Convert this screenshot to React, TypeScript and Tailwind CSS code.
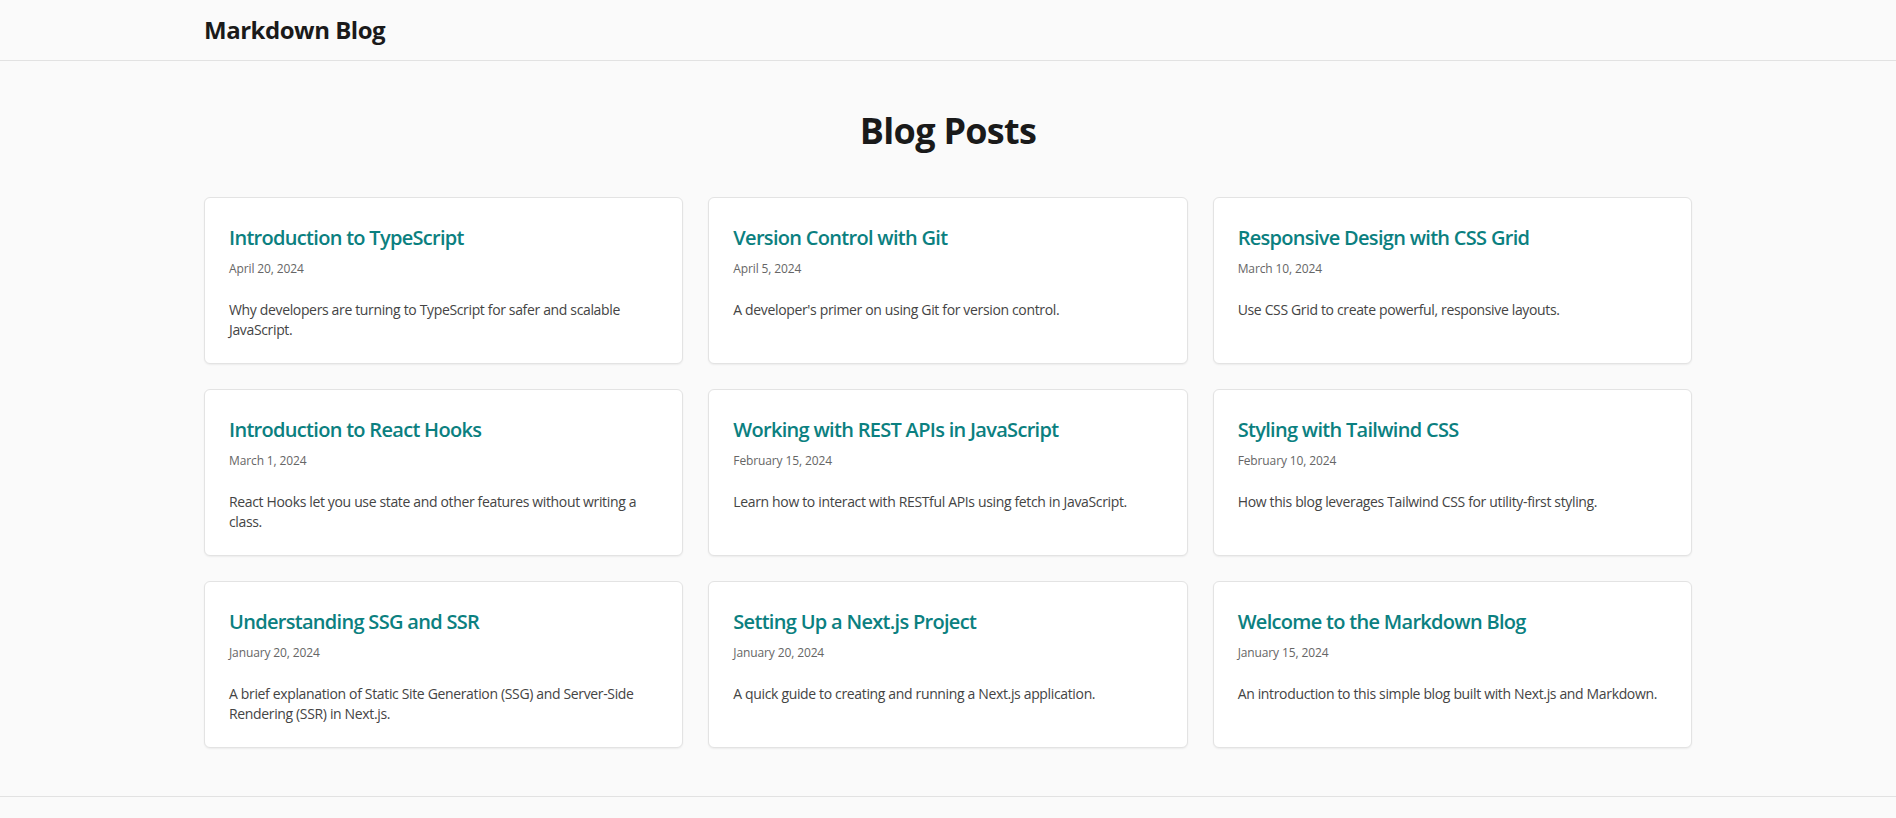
import React from "react";

interface Post {
    title: string;
    date: string;
    excerpt: string;
}

const posts: Post[] = [
    {
        title: "Introduction to TypeScript",
        date: "April 20, 2024",
        excerpt: "Why developers are turning to TypeScript for safer and scalable JavaScript.",
    },
    {
        title: "Version Control with Git",
        date: "April 5, 2024",
        excerpt: "A developer's primer on using Git for version control.",
    },
    {
        title: "Responsive Design with CSS Grid",
        date: "March 10, 2024",
        excerpt: "Use CSS Grid to create powerful, responsive layouts.",
    },
    {
        title: "Introduction to React Hooks",
        date: "March 1, 2024",
        excerpt: "React Hooks let you use state and other features without writing a class.",
    },
    {
        title: "Working with REST APIs in JavaScript",
        date: "February 15, 2024",
        excerpt: "Learn how to interact with RESTful APIs using fetch in JavaScript.",
    },
    {
        title: "Styling with Tailwind CSS",
        date: "February 10, 2024",
        excerpt: "How this blog leverages Tailwind CSS for utility-first styling.",
    },
    {
        title: "Understanding SSG and SSR",
        date: "January 20, 2024",
        excerpt: "A brief explanation of Static Site Generation (SSG) and Server-Side Rendering (SSR) in Next.js.",
    },
    {
        title: "Setting Up a Next.js Project",
        date: "January 20, 2024",
        excerpt: "A quick guide to creating and running a Next.js application.",
    },
    {
        title: "Welcome to the Markdown Blog",
        date: "January 15, 2024",
        excerpt: "An introduction to this simple blog built with Next.js and Markdown.",
    },
];

function PostCard({ title, date, excerpt }: Post) {
    return (
        <article className="bg-white border border-[#e3e3e3] rounded-md shadow-[0_1px_2px_rgba(0,0,0,0.06)] px-6 pt-[26px] pb-[23px]">
            <h2 className="text-xl leading-7 font-semibold tracking-[-0.035em] text-[#0b8080]">{title}</h2>
            <p className="mt-[9px] text-xs leading-4 tracking-[-0.01em] text-[#666]">{date}</p>
            <p className="mt-[23px] text-sm leading-5 tracking-[-0.025em] text-[#444]">{excerpt}</p>
        </article>
    );
}

export default function App() {
    return (
        <div className="min-h-screen bg-[#fafafa] text-[#1a1a1a] font-['Open_Sans',sans-serif]">
            <header className="border-b border-[#e2e2e2]">
                <div className="max-w-[1536px] mx-auto px-6 py-4">
                    <h1 className="text-2xl leading-7 font-bold tracking-[-0.02em]">Markdown Blog</h1>
                </div>
            </header>

            <main className="max-w-[1536px] mx-auto px-6 pt-[50px] pb-12">
                <h1 className="text-4xl leading-10 font-bold tracking-[-0.02em] text-center mb-[46px]">Blog Posts</h1>
                <div className="grid grid-cols-3 gap-[25px]">
                    {posts.map((p) => (
                        <PostCard key={p.title} {...p} />
                    ))}
                </div>
            </main>

            <footer className="border-t border-[#e2e2e2] h-5" />
        </div>
    );
}
